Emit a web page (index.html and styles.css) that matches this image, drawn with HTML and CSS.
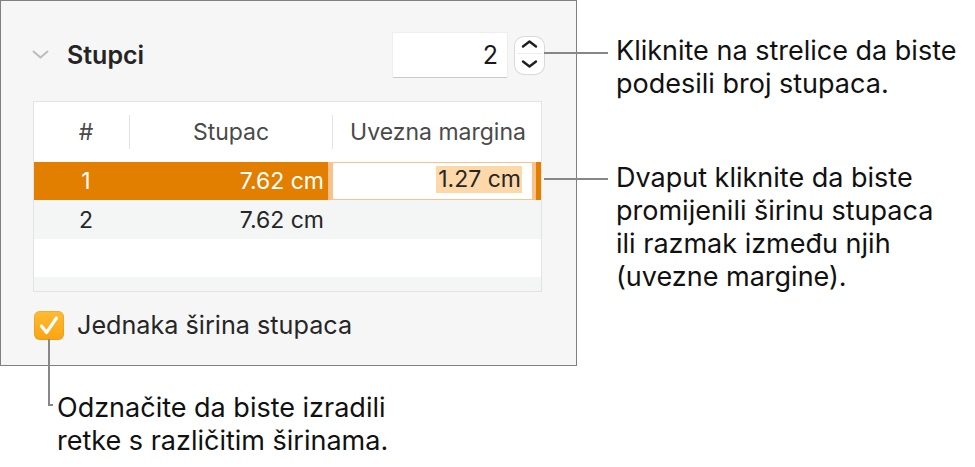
FILE: index.html
```html
<!DOCTYPE html>
<html lang="hr">
<head>
<meta charset="utf-8">
<title>Stupci</title>
<link rel="stylesheet" href="styles.css">
</head>
<body>
<div class="canvas">
  <section class="panel">
    <div class="header">
      <svg class="disclosure" width="17" height="9" viewBox="0 0 17 9"><path d="M1.5 1.5 L8.5 7.5 L15.5 1.5" fill="none" stroke="#bcbcbc" stroke-width="2" stroke-linecap="round" stroke-linejoin="round"/></svg>
      <span class="title">Stupci</span>
      <span class="spacer"></span>
      <div class="numfield">2</div>
      <div class="stepper">
        <svg width="29" height="37" viewBox="0 0 29 37">
          <path d="M8 9.5 L14.5 4.5 L21 9.5" fill="none" stroke="#1f1f1f" stroke-width="2.4" stroke-linecap="round" stroke-linejoin="round"/>
          <line x1="2" y1="16.5" x2="27" y2="16.5" stroke="#ececec" stroke-width="1"/>
          <path d="M8 24.5 L14.5 29.5 L21 24.5" fill="none" stroke="#1f1f1f" stroke-width="2.4" stroke-linecap="round" stroke-linejoin="round"/>
        </svg>
      </div>
    </div>

    <div class="table">
      <div class="thead">
        <div class="th c1">#</div>
        <div class="th c2">Stupac</div>
        <div class="th c3">Uvezna margina</div>
      </div>
      <div class="row sel">
        <div class="td c1">1</div>
        <div class="td c2 num">7.62 cm</div>
        <div class="td c3"></div>
        <div class="editor"><div class="editor-inner"><span class="hl">1.27 cm</span></div></div>
      </div>
      <div class="row alt">
        <div class="td c1">2</div>
        <div class="td c2 num">7.62 cm</div>
        <div class="td c3"></div>
      </div>
      <div class="row"></div>
      <div class="row alt short"></div>
    </div>

    <label class="check">
      <span class="box">
        <svg width="30" height="29" viewBox="0 0 30 29"><path d="M7.5 15 L12.5 21.5 L22.5 7" fill="none" stroke="#fff" stroke-width="3.2" stroke-linecap="round" stroke-linejoin="round"/></svg>
      </span>
      <span class="label">Jednaka širina stupaca</span>
    </label>
  </section>

  <div class="leader l1"></div>
  <div class="leader l2"></div>
  <div class="leader l3v"></div>
  <div class="leader l3h"></div>

  <p class="callout k1">Kliknite na strelice da biste<br>podesili broj stupaca.</p>
  <p class="callout k2">Dvaput kliknite da biste<br>promijenili širinu stupaca<br>ili razmak između njih<br>(uvezne margine).</p>
  <p class="callout k3">Odznačite da biste izradili<br>retke s različitim širinama.</p>
</div>
</body>
</html>
```

FILE: styles.css
```css
* { box-sizing: border-box; }
html, body { margin: 0; padding: 0; background: #fff; }
body { font-family: Inter, Roboto, "Liberation Sans", Arial, sans-serif; color: #111; }

.canvas { position: relative; width: 975px; height: 467px; overflow: hidden; }

.panel {
  width: 577px;
  height: 366px;
  background: #f6f6f6;
  border: 1px solid #808080;
  display: flex;
  flex-direction: column;
  padding: 32px 32px 0 31px;
}

.header {
  display: flex;
  align-items: center;
  height: 44px;
}
.disclosure { display: block; margin-top: -2px; }
.title {
  margin-left: 18px;
  font-size: 25px;
  font-weight: 600;
  color: #242424;
}
.spacer { flex: 1; }
.numfield {
  width: 114px;
  height: 44px;
  background: #fff;
  box-shadow: 0 1px 0 #c9c9c9, 0 0 0 0.5px #e6e6e6;
  text-align: right;
  padding-right: 9px;
  font-size: 25px;
  line-height: 44px;
  color: #1a1a1a;
}
.stepper {
  margin-left: 8px;
  width: 29px;
  height: 37px;
  background: #fff;
  border-radius: 9px;
  box-shadow: 0 0 0 1px #dadada, 0 1px 1px rgba(0,0,0,0.08);
}
.stepper svg { display: block; }

.table {
  margin-top: 24px;
  margin-left: 1px;
  width: 509px;
  height: 191px;
  border: 1px solid #e3e3e3;
  background: #fff;
  display: flex;
  flex-direction: column;
}
.thead {
  display: flex;
  height: 60px;
  align-items: center;
}
.th {
  font-size: 23px;
  color: #4a4a4a;
  text-align: center;
  height: 34px;
  line-height: 34px;
}
.c1 { width: 95px; padding-left: 9px; }
.c2 { width: 203px; }
.c3 { width: 209px; }
.th.c2, .th.c3 { border-left: 1px solid #e2e2e2; }
.th.c3 { padding-left: 2px; }

.row {
  position: relative;
  display: flex;
  height: 38px;
  align-items: center;
  font-size: 23px;
  color: #262626;
}
.row.alt { background: #f4f5f5; height: 39px; }
.row.short { height: 14px; }
.td { line-height: 38px; }
.td.c1 { text-align: center; }
.td.num { text-align: right; padding-right: 8px; }
.row.sel { background: #e27f00; color: #fff; }

.editor {
  position: absolute;
  left: 294px;
  top: 0;
  width: 208px;
  height: 43px;
  background: #fff;
  border-style: solid;
  border-color: #f7c28d;
  border-width: 1px 4px 6px 5px;
  border-radius: 0 0 6px 6px;
}
.editor-inner {
  height: 36px;
  text-align: right;
  padding-right: 10px;
  padding-top: 2px;
  color: #262626;
}
.hl {
  display: inline-block;
  background: #fdd9aa;
  line-height: 27px;
  padding: 0 1px 0 2px;
}

.check {
  display: flex;
  align-items: center;
  margin-top: 18px;
  margin-left: 2px;
}
.box {
  width: 30px;
  height: 29px;
  border-radius: 6px;
  background: linear-gradient(#ffbb35, #f9a411);
  box-shadow: inset 0 0 0 0.5px rgba(200,120,0,0.4);
}
.box svg { display: block; }
.label {
  margin-left: 13px;
  font-size: 25.2px;
  color: #262626;
}

.leader { position: absolute; background: #878787; }
.l1 { left: 544px; top: 52px; width: 64px; height: 2px; }
.l2 { left: 544px; top: 178px; width: 64px; height: 2px; }
.l3v { left: 48px; top: 339px; width: 2px; height: 67px; }
.l3h { left: 48px; top: 404px; width: 5px; height: 2px; }

.callout {
  position: absolute;
  margin: 0;
  font-size: 27px;
  line-height: 33px;
  color: #111;
  white-space: nowrap;
}
.k1 { left: 616px; top: 34px; }
.k2 { left: 616px; top: 161px; }
.k3 { left: 57px; top: 391px; }
```
